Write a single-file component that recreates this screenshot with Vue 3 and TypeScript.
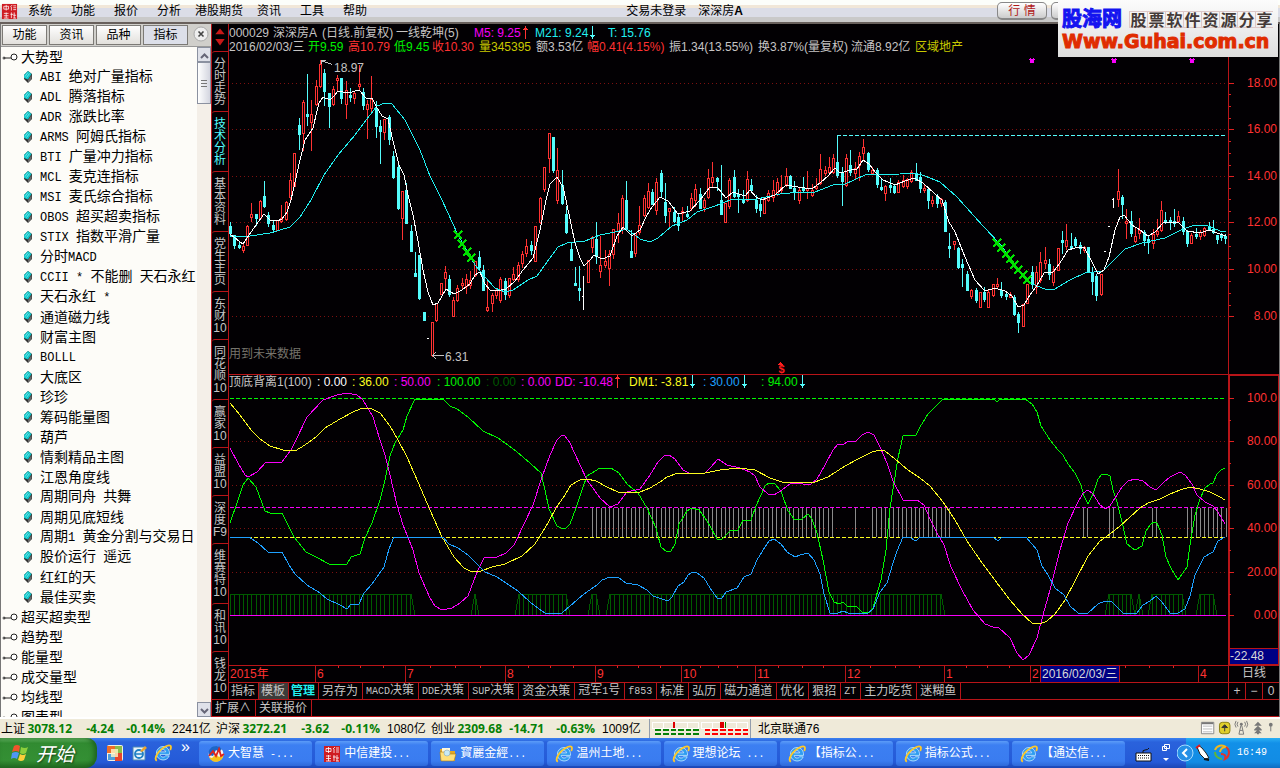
<script setup lang="ts">
import { ref } from 'vue'

interface Run { text: string; latin: boolean }
interface Readout { text: string; tone: string; width: number; arrow?: 'up' | 'down' }

/* Latin characters are set in a half-width face next to full-width ideographs. */
function runs(source: string): Run[] {
  return (source.match(/[\x20-\x7e]+|[^\x20-\x7e]+/g) ?? []).map((text) => ({
    text,
    latin: /^[\x20-\x7e]/.test(text),
  }))
}

const menus = ['系统', '功能', '报价', '分析', '港股期货', '资讯', '工具', '帮助']
const panels = ['功能', '资讯', '品种', '指标']
const activePanel = ref('指标')

const indicators = [
  'ABI 绝对广量指标', 'ADL 腾落指标', 'ADR 涨跌比率', 'ARMS 阿姆氏指标', 'BTI 广量冲力指标',
  'MCL 麦克连指标', 'MSI 麦氏综合指标', 'OBOS 超买超卖指标', 'STIX 指数平滑广量', '分时MACD',
  'CCII * 不能删 天石永红', '天石永红 *', '通道磁力线', '财富主图', 'BOLLL', '大底区', '珍珍',
  '筹码能量图', '葫芦', '情剩精品主图', '江恩角度线', '周期同舟 共舞', '周期见底短线',
  '周期1 黄金分割与交易日', '股价运行 遥远', '红红的天', '最佳买卖',
]
const groups = ['超买超卖型', '趋势型', '能量型', '成交量型', '均线型', '图表型']

const views: string[][] = [
  ['分', '时', '走', '势'], ['技', '术', '分', '析'], ['基', '本', '资', '料'], ['党', '生', '主', '页'],
  ['东', '财', '10'], ['同', '花', '顺', '10'], ['赢', '家', '10'], ['益', '盟', '10'],
  ['深', '度', 'F9'], ['维', '赛', '特', '10'], ['和', '讯', '10'], ['钱', '龙', '10'],
]
const activeView = ref(1)

const titleLine: Readout[] = [
  { text: '000029', tone: 'plain', width: 44 },
  { text: '深深房A', tone: 'plain', width: 49 },
  { text: '(日线.前复权)', tone: 'plain', width: 74 },
  { text: '一线乾坤(5)', tone: 'plain', width: 78 },
  { text: 'M5: 9.25', tone: 'magenta', width: 61, arrow: 'up' },
  { text: 'M21: 9.24', tone: 'cyan', width: 73, arrow: 'down' },
  { text: 'T: 15.76', tone: 'cyan', width: 60 },
]
const quoteLine: Readout[] = [
  { text: '2016/02/03/三', tone: 'plain', width: 79 },
  { text: '开9.59', tone: 'green', width: 40 },
  { text: '高10.79', tone: 'red', width: 46 },
  { text: '低9.45', tone: 'green', width: 38 },
  { text: '收10.30', tone: 'red', width: 47 },
  { text: '量345395', tone: 'olive', width: 57 },
  { text: '额3.53亿', tone: 'plain', width: 51 },
  { text: '幅0.41(4.15%)', tone: 'red', width: 82 },
  { text: '振1.34(13.55%)', tone: 'plain', width: 89 },
  { text: '换3.87%(量复权)', tone: 'plain', width: 93 },
  { text: '流通8.92亿', tone: 'plain', width: 64 },
  { text: '区域地产', tone: 'olive', width: 50 },
]
const studyLine: Readout[] = [
  { text: '顶底背离1(100)', tone: 'plain', width: 88 },
  { text: ': 0.00', tone: 'white', width: 35 },
  { text: ': 36.00', tone: 'yellow', width: 42 },
  { text: ': 50.00', tone: 'magenta', width: 43 },
  { text: ': 100.00', tone: 'green', width: 49 },
  { text: ': 0.00', tone: 'forest', width: 35 },
  { text: ': 0.00', tone: 'magenta', width: 34 },
  { text: 'DD: -10.48', tone: 'magenta', width: 74, arrow: 'up' },
  { text: 'DM1: -3.81', tone: 'yellow', width: 74, arrow: 'down' },
  { text: ': 30.00', tone: 'blue', width: 58, arrow: 'down' },
  { text: ': 94.00', tone: 'green', width: 50, arrow: 'down' },
]

/* x, rising(1)/falling(0)/flat(2), high, body top, body bottom, low */
const candles: number[][] = [
  [230,0,222,226,233,235],[234,0,235,235,245,248],[239,0,241,245,247,248],[243,1,244,246,250,252],[247,1,225,226,245,245],[251,1,203,214,217,221],[256,0,214,214,218,225],[260,1,200,201,218,218],[264,0,181,196,206,207],[268,0,212,215,223,226],[273,0,220,225,229,232],[277,1,220,220,230,230],[281,1,205,218,221,222],[286,1,201,202,219,220],[290,1,173,180,197,199],[294,1,153,153,186,186],[299,0,118,125,134,149],[303,1,100,102,133,150],[307,0,74,114,116,125],[311,1,100,114,122,150],[316,1,80,86,104,105],[320,1,60,64,86,87],[324,0,69,73,91,105],[329,0,93,93,106,127],[333,1,86,89,104,105],[337,1,75,78,80,90],[341,0,78,78,98,103],[346,1,81,90,104,118],[350,0,88,95,97,101],[354,1,91,93,98,103],[359,1,65,84,86,90],[363,0,88,92,105,109],[367,1,100,104,109,138],[371,1,76,99,108,111],[376,0,101,108,126,137],[380,0,120,126,131,163],[384,1,119,119,132,139],[389,0,115,117,139,144],
  [393,0,151,156,177,178],[398,0,162,167,208,209],[402,1,191,191,218,239],[406,0,183,190,223,223],[411,0,225,231,251,251],[415,0,252,273,276,276],[419,0,255,255,298,299],[424,0,312,312,320,320],[428,2,338,338,338,338],[432,1,322,322,355,356],[436,1,303,303,320,321],[441,1,283,283,294,294],[445,1,266,272,278,288],[449,0,275,279,294,296],[453,1,297,300,316,316],[457,1,285,288,300,301],[462,1,278,283,285,288],[466,1,274,279,286,293],[470,1,271,280,285,288],[475,1,261,261,275,276],[479,0,251,257,267,270],[483,0,265,270,290,290],[487,1,279,307,310,311],[492,1,293,295,303,311],[496,1,289,290,295,298],[500,1,277,279,300,302],[505,0,278,281,294,299],[509,1,278,278,295,297],[513,1,267,274,279,280],[518,1,262,265,279,281],[522,1,251,254,263,267],[526,1,239,246,253,256],[531,0,241,245,250,254],[535,1,226,226,261,261],
  [540,1,197,198,222,223],[544,1,167,167,189,191],[549,1,133,133,158,172],[553,0,137,137,170,172],[557,1,148,170,200,203],[562,0,170,185,203,204],[566,0,206,214,232,233],[571,0,242,249,260,260],[575,0,267,283,285,285],[579,0,266,288,290,300],[583,2,276,296,296,309],[588,1,260,260,282,282],[592,1,236,237,247,252],[596,0,222,239,256,263],[600,1,236,265,271,277],[605,1,250,261,265,267],[609,1,250,254,268,285],[613,1,229,229,254,258],[618,1,213,223,231,242],[622,1,195,198,228,233],[626,0,181,200,229,230],[631,0,230,251,257,257],[635,1,233,233,253,256],[639,1,206,225,232,234],[644,1,195,198,215,216],[648,1,183,191,207,208],[652,0,189,192,204,204],[656,1,178,182,210,214],[661,0,170,173,191,196],[665,0,183,202,215,222],[669,1,208,208,211,226],[674,0,207,212,221,222],[678,0,214,217,225,230],[682,1,207,211,213,220],[687,0,206,214,216,217],[691,1,193,198,208,210],[695,1,184,189,200,206],[700,0,188,194,208,208],[704,1,198,200,207,211],[708,1,169,178,197,198],[712,1,162,177,182,186],[717,0,177,178,181,190],[721,0,165,200,214,214],[725,1,203,203,222,222],[729,1,178,180,206,208],[734,0,170,177,196,197],[738,0,189,194,196,212],[743,0,190,200,202,203],[747,1,171,179,200,201],[751,0,179,185,190,191],[756,0,195,200,208,212],[760,0,200,204,210,216],[764,1,198,198,213,213],[768,1,190,193,200,201],[773,1,180,190,197,201],
  [777,1,178,182,194,195],[781,1,175,187,190,193],[786,1,168,176,184,186],[790,0,175,176,188,188],[794,0,181,188,191,199],[799,1,188,190,200,203],[803,0,177,188,190,191],[807,1,171,188,190,198],[812,1,184,190,195,196],[816,1,178,186,188,189],[820,1,154,169,183,184],[825,1,166,170,173,175],[829,1,157,167,172,173],[833,1,154,158,172,173],[837,0,136,162,175,177],[842,0,167,172,181,205],[846,1,154,158,185,186],[850,0,150,165,172,175],[855,1,162,168,173,178],[859,1,152,156,165,180],[863,1,139,147,153,160],[868,0,152,153,169,171],[872,1,167,170,173,174],[877,0,168,170,184,187],[881,0,179,187,189,190],[885,1,185,186,193,200],[890,0,178,185,187,192],[894,0,184,186,192,193],[898,1,180,182,192,192],[903,1,175,180,186,187],[907,1,178,179,186,188],[911,1,170,172,181,182],[916,0,163,173,180,180],[920,0,172,177,188,192],[924,1,185,188,190,192],[928,0,187,189,200,208],[932,1,196,200,203,206],[937,0,194,196,203,207],[941,1,198,199,203,206],[945,0,200,202,231,231],[949,0,233,246,248,257],[954,1,241,241,244,249],[958,0,247,248,267,268],[962,0,259,264,267,286],[967,0,271,274,290,290],[971,1,289,290,296,298],[976,0,288,290,300,302],[980,1,292,292,307,307],[984,0,287,292,299,301],[988,1,290,292,307,307],[993,1,284,284,295,296],[997,1,278,284,286,288],[1001,0,282,290,295,297],[1006,0,291,294,296,299],[1010,1,292,294,297,297],
  [1014,0,295,297,314,315],[1018,0,312,314,322,332],[1023,1,304,304,326,326],[1027,1,284,284,303,303],[1032,0,266,272,284,288],[1036,1,266,272,287,293],[1040,1,252,262,280,282],[1045,1,247,260,263,268],[1049,0,259,264,274,279],[1053,1,266,271,282,285],[1058,1,248,248,270,270],[1062,0,231,240,242,253],[1066,1,224,240,246,249],[1071,0,233,246,248,248],[1075,0,237,239,245,247],[1080,0,242,245,248,253],[1084,1,246,247,250,252],[1088,0,247,247,271,271],[1092,0,267,272,281,294],[1096,0,274,276,295,300],[1101,1,274,274,294,295],[1105,2,251,251,251,251],[1109,2,226,226,226,226],[1113,2,198,199,199,207],[1118,1,169,191,199,206],[1122,0,195,197,204,218],[1126,1,209,221,223,238],[1131,0,211,221,233,236],[1135,1,227,236,241,242],[1139,1,218,230,233,238],[1144,0,230,232,240,245],[1148,0,236,239,242,253],[1153,1,229,234,243,248],[1157,1,219,231,234,236],[1161,1,201,210,230,231],[1165,0,212,220,222,223],[1170,0,217,220,222,229],[1174,0,209,221,223,226],[1178,1,211,216,221,222],[1183,0,217,221,231,234],[1187,0,230,231,243,246],[1191,1,233,235,243,243],[1196,0,228,234,236,238],[1200,1,230,232,236,239],[1204,1,227,228,235,236],[1209,0,222,227,229,230],[1213,0,220,229,232,233],[1217,0,235,235,239,243],[1221,0,233,235,237,240],[1225,0,234,236,238,243],
]

const fastAverage = '230,234 235,238 243,244 247,238 256,225 264,214 270,220 277,221 282,219 287,212 291,200 300,160 305,140 313,128 319,103 323,97 330,100 334,96 338,91 348,93 359,90 366,98 372,98 376,106 382,116 388,119 393,141 399,165 404,175 408,195 413,215 418,241 423,270 428,292 433,305 438,303 446,289 454,294 462,290 470,284 475,275 480,272 485,284 490,290 496,291 506,289 515,281 523,270 533,258 540,230 546,200 550,184 557,177 563,187 566,200 575,243 580,258 584,266 590,260 594,255 602,259 610,256 617,236 623,227 632,236 640,230 646,217 652,207 660,197 668,201 678,214 690,211 700,200 710,187 717,187 726,198 733,192 745,196 750,190 756,197 762,200 775,195 786,185 798,187 812,189 820,183 828,176 835,168 840,173 851,170 857,169 863,160 869,164 876,173 883,180 895,185 905,181 914,178 923,183 935,194 942,200 949,222 955,232 965,257 975,280 985,291 995,288 1005,291 1012,296 1018,307 1024,305 1030,295 1036,287 1044,273 1053,272 1060,263 1068,250 1075,248 1084,247 1092,262 1098,274 1104,270 1109,257 1115,230 1120,217 1124,215 1132,225 1140,230 1148,236 1155,232 1163,223 1178,222 1187,231 1200,233 1209,230 1217,233 1226,236'
const slowAverage = '230,236 250,236 270,233 290,227 300,217 311,200 324,175 338,155 355,135 370,115 377,106 385,103 392,104 405,120 420,150 430,176 442,200 458,235 475,265 485,277 495,288 505,292 513,290 528,280 537,276 547,262 558,247 567,243 585,241 600,235 615,232 627,229 640,239 650,242 658,238 672,226 687,220 697,212 715,206 730,200 757,199 780,194 800,192 815,192 833,185 845,184 865,175 900,174 915,173 925,176 940,182 957,197 983,226 1000,244 1020,272 1032,284 1045,289 1055,289 1070,280 1085,273 1103,271 1125,249 1142,243 1165,238 1183,229 1195,225 1208,226 1220,231 1226,232'
const crosses: number[][] = [
  [458,235],[462,244],[467,252],[471,258],[997,243],[1001,248],[1006,254],[1010,259],[1014,265],[1018,270],[1023,275],[1027,280],
]
const flags: number[][] = [[1032, 61], [1114, 61], [1192, 61]]

const curves = [
  { tone: 'stroke-green', points: '230,523 237,503 243,485 248,478 256,487 265,511 270,513 282,513 294,537 306,552 316,557 329,564 347,564 351,557 360,554 365,538 372,523 380,500 385,480 390,456 395,443 403,430 407,416 415,399 443,399 450,406 457,409 468,417 483,431 498,438 512,448 517,452 530,463 541,473 545,490 549,509 557,526 561,528 566,528 570,524 576,508 582,490 587,476 600,468 611,468 619,473 627,484 638,493 647,508 656,528 661,547 667,552 671,551 675,544 679,524 687,511 692,508 699,510 705,518 710,526 717,539 722,539 730,531 738,530 743,520 751,520 756,506 765,486 769,483 774,483 781,491 788,511 795,520 802,519 808,514 812,519 817,533 823,560 829,592 834,602 839,604 843,602 847,606 856,606 862,612 869,613 873,608 876,597 881,580 886,550 890,508 894,483 898,458 903,436 916,435 920,427 928,414 937,405 943,399 994,399 997,402 1000,399 1025,399 1032,404 1037,412 1041,426 1050,440 1058,450 1063,455 1068,464 1075,473 1081,485 1084,496 1088,504 1093,494 1098,479 1102,474 1106,474 1110,476 1113,490 1117,502 1123,526 1127,544 1135,550 1142,546 1146,531 1150,525 1154,522 1157,523 1162,535 1166,557 1171,568 1178,580 1187,567 1190,545 1195,515 1200,499 1205,488 1210,484 1213,483 1217,474 1221,470 1225,468' },
  { tone: 'stroke-magenta', points: '230,448 238,463 245,475 248,477 257,472 266,462 282,462 291,450 296,440 307,417 323,400 337,395 347,393 357,395 363,400 373,417 380,440 385,455 390,475 397,505 403,525 413,550 419,573 430,598 435,606 442,610 452,608 460,603 468,596 474,580 478,570 484,558 497,557 506,553 514,545 525,522 533,505 542,477 550,455 557,440 562,435 565,436 570,443 580,465 587,480 595,491 600,498 610,507 618,504 627,492 640,489 650,475 658,462 664,456 669,455 675,459 683,470 691,474 697,473 705,473 711,467 718,459 727,465 740,468 750,472 755,476 760,487 768,494 774,495 782,490 791,483 803,484 811,484 817,479 825,465 833,450 838,444 843,445 848,441 856,441 862,435 868,432 874,435 880,447 887,463 893,481 903,500 911,501 917,500 924,505 930,519 937,533 944,545 951,567 962,590 973,610 985,624 993,627 998,627 1010,638 1017,653 1023,660 1029,655 1037,638 1043,615 1050,590 1060,550 1068,523 1077,504 1083,493 1088,490 1093,494 1100,505 1106,509 1110,506 1115,498 1122,487 1128,481 1135,479 1143,481 1150,487 1156,490 1163,483 1170,477 1176,474 1180,472 1185,475 1192,484 1197,495 1205,502 1213,506 1218,512 1225,524' },
  { tone: 'stroke-yellow', points: '230,403 240,415 251,430 260,439 270,446 283,450 295,451 305,445 316,437 325,428 340,419 355,411 363,408 370,408 380,413 390,426 398,440 407,457 418,482 430,510 442,537 454,557 464,568 472,572 481,571 492,567 505,564 522,556 535,544 548,523 556,508 565,495 571,485 580,480 587,479 596,481 607,487 618,492 640,492 650,488 660,482 667,477 678,473 705,473 720,470 738,468 755,470 770,478 782,482 800,483 815,482 828,477 845,466 860,458 872,452 880,450 885,451 895,459 908,470 920,478 930,486 943,502 955,520 967,541 980,560 997,583 1010,600 1022,614 1032,623 1040,624 1047,621 1055,614 1065,600 1075,581 1088,556 1100,541 1110,534 1120,526 1140,508 1148,503 1160,499 1170,494 1180,490 1190,487 1200,489 1210,492 1220,497 1225,500' },
  { tone: 'stroke-blue', points: '230,537 249,537 258,543 268,552 282,552 289,565 295,574 307,585 320,593 327,599 340,605 347,609 351,604 359,604 364,593 372,584 384,567 389,549 394,537 443,537 449,544 458,548 468,555 480,567 485,572 497,577 518,591 530,602 539,609 545,613 562,613 570,606 584,594 597,585 602,580 610,577 618,577 626,583 638,585 647,590 653,596 662,599 668,601 672,597 678,586 684,582 688,575 693,572 697,573 704,578 710,588 717,598 722,598 726,592 737,588 744,577 751,574 757,560 765,547 769,541 774,539 781,544 787,552 795,557 800,555 808,553 814,560 820,574 824,594 830,613 838,613 843,611 848,613 868,613 873,609 880,592 887,583 893,563 897,551 903,537 909,537 916,541 920,537 993,537 998,541 1002,537 1026,537 1037,550 1042,566 1048,575 1055,588 1064,595 1070,606 1078,613 1088,613 1098,604 1105,601 1111,601 1117,607 1123,613 1137,613 1143,605 1150,601 1156,596 1162,602 1170,613 1178,613 1185,609 1190,596 1195,575 1204,557 1213,552 1218,541 1225,537' },
]

const STEP = 30 / 7
function barsBetween(from: number, to: number): number[] {
  const out: number[] = []
  for (let x = from; x <= to + 1; x += STEP) out.push(Math.round(x))
  return out
}
const plateaus: number[][] = [
  [230, 411], [475, 475], [519, 566], [592, 596], [610, 941], [1109, 1131], [1139, 1139], [1152, 1182], [1200, 1213],
]
const forestBars = plateaus.flatMap(([a, b]) => barsBetween(a, b))
const forestTops = plateaus.map(([a, b]) => `${a === 230 ? 230 : a - 4},615 ${a},594 ${b},594 ${b + 4},615`)
const greyBars = [
  ...barsBetween(592, 833), 855, ...barsBetween(872, 949), 1083, 1087, 1109, 1113, 1152, 1156, ...barsBetween(1187, 1225),
]

const priceTicks = [18, 16, 14, 12, 10, 8].map((v, i) => ({ label: `${v}.00`, y: [83, 129, 176, 222, 269, 316][i] }))
const studyTicks = [100, 80, 60, 40, 20, 0].map((v, i) => ({
  label: v === 100 ? '100.0' : `${v}.00`,
  y: [398, 441, 485, 528, 572, 615][i],
}))
const priceMinor = [94, 106, 118, 141, 153, 165, 188, 199, 211, 234, 246, 258, 281, 293, 305]
const studyMinor = [420, 463, 507, 550, 594]

const months = [
  { label: '2015年', x: 229, first: true }, { label: '6', x: 315 }, { label: '7', x: 405 }, { label: '8', x: 505 },
  { label: '9', x: 595 }, { label: '10', x: 681 }, { label: '11', x: 755 }, { label: '12', x: 845 },
  { label: '1', x: 944 }, { label: '2', x: 1030 }, { label: '4', x: 1198 },
]
const axisTicks = [338, 360, 383, 430, 455, 480, 528, 550, 573, 617, 638, 660, 700, 718, 737, 778, 802, 823, 870, 895, 919, 966, 987, 1009, 1125, 1149, 1173]
const leftOf = (x: number) => ({ left: `${((x - 229) / 999) * 100}%` })
const priceTop = (y: number) => ({ top: `${((y - 24) / 350) * 100}%` })
const studyTop = (y: number) => ({ top: `${((y - 374) / 291) * 100}%` })

const templates = [
  '指标', '模板', '管理', '另存为', 'MACD决策', 'DDE决策', 'SUP决策', '资金决策', '冠军1号', 'f853', '标准',
  '弘历', '磁力通道', '优化', '狠招', 'ZT', '主力吃货', '迷糊鱼',
]
const indices = [
  { name: '上证', value: '3078.12', change: '-4.24', rate: '-0.14%', amount: '2241亿' },
  { name: '沪深', value: '3272.21', change: '-3.62', rate: '-0.11%', amount: '1080亿' },
  { name: '创业', value: '2309.68', change: '-14.71', rate: '-0.63%', amount: '1009亿' },
]
const tasks = [
  { label: '大智慧 -...', icon: 'wisdom' }, { label: '中信建投...', icon: 'seal' }, { label: '寳麗金經...', icon: 'folder' },
  { label: '温州土地...', icon: 'ie' }, { label: '理想论坛 ...', icon: 'ie' }, { label: '【指标公...', icon: 'ie' },
  { label: '指标公式...', icon: 'ie' }, { label: '【通达信...', icon: 'ie' },
]
</script>

<template>
  <div class="desktop">
    <svg class="defs" aria-hidden="true">
      <symbol id="ie" viewBox="0 0 18 18">
        <path d="M9 2.500a6.700 6.700 0 0 0-6.600 6.800A6.600 6.600 0 0 0 9 16c3 0 5.200-1.500 6.200-4.200h-3.600c-.6.9-1.400 1.300-2.500 1.300-1.700 0-2.800-1-2.900-2.700h9.300C15.900 5.800 13.100 2.500 9 2.500zm-2.800 5.400C6.500 6.500 7.600 5.600 9 5.600s2.500.9 2.700 2.300z" fill="#2f9cf0" stroke="#c4ecff" stroke-width=".8" />
        <path d="M2.800 16.800C-1 14 5.500 5 12.500 2 16.500.4 18 2.200 16.200 6" fill="none" stroke="#ffc928" stroke-width="1.800" />
      </symbol>
      <symbol id="wisdom" viewBox="0 0 18 18">
        <circle cx="9" cy="9" r="7.500" fill="#f4f4f4" />
        <path d="M1.500 8A7.500 7.500 0 0 1 15 4l-3 3-3-2-3 6-4-1z" fill="#1b66c9" />
        <path d="M16.500 9A7.500 7.500 0 0 1 2 12l3 1 4-4 3 3z" fill="#f6c21c" />
        <path d="M2 11l4-5 3 5 3-7 2 7 3-2" fill="none" stroke="#e0241b" stroke-width="1.800" />
      </symbol>
      <symbol id="seal" viewBox="0 0 18 18">
        <path d="M1 1h16v16H1z" fill="#cf1c22" />
        <path d="M3 3.500h5v3H3zM5.500 2v6M10 4l2-2M11 4v4M13 3h3M13 5h3M13 7h3M3 11h5M3 13.500h5M5.500 10v6M3 16h5M11 10v6M10 12h3M14 10v6M13 13h3M13 16h3" fill="none" stroke="#fff" stroke-width=".8" />
      </symbol>
      <symbol id="folder" viewBox="0 0 18 18">
        <path d="M1 4h6l2 2h7v10H2z" fill="#e5a823" />
        <path d="M3 3h8v9H3z" fill="#fff8dc" />
        <path d="M1 7h5l2 2h9l-2 7H2z" fill="#ffe07a" stroke="#a97710" stroke-width=".6" />
        <circle cx="8" cy="8" r="3" fill="#c8eaf6" stroke="#8ab" stroke-width=".6" />
      </symbol>
      <symbol id="arrow-up" viewBox="0 0 5 13">
        <path d="M2 0h1v13H2zM1 2h3v1H1zM0 3h5v1H0z" fill="#ff3232" />
      </symbol>
      <symbol id="arrow-down" viewBox="0 0 5 13">
        <path d="M2 0h1v13H2zM1 10h3v1H1zM0 9h5v1H0z" fill="#54fcfc" />
      </symbol>
    </svg>

    <header class="menubar">
      <svg class="logo" viewBox="0 0 17 17" aria-hidden="true"><use href="#seal" /></svg>
      <nav class="menus">
        <button v-for="m in menus" :key="m" type="button" :class="{ tight: m.length > 2 }">{{ m }}</button>
      </nav>
      <p class="caption"><span>交易未登录</span><span>深深房<b>A</b></span></p>
      <div class="modes">
        <button type="button">行 情</button>
        <button type="button" aria-label="资讯"></button>
      </div>
    </header>

    <div class="watermark">
      <div class="mark-top">
        <strong>股海网</strong>
        <span class="slogan"><i v-for="ch in '股票软件资源分享'" :key="ch">{{ ch }}</i></span>
      </div>
      <div class="mark-url">Www.Guhai.com.cn</div>
    </div>

    <main class="body">
      <aside class="sidebar">
        <div class="panel-tabs">
          <button v-for="p in panels" :key="p" type="button" :class="{ active: p === activePanel }" @click="activePanel = p">{{ p }}</button>
          <button type="button" class="close" aria-label="关闭">
            <svg viewBox="0 0 16 16"><circle cx="8" cy="8" r="7" fill="#eee" stroke="#aaa" /><path d="M5.500 5.500l5 5M10.500 5.500l-5 5" stroke="#444" stroke-width="1.600" /></svg>
          </button>
        </div>
        <div class="tree-wrap">
          <ul class="tree">
            <li class="group">
              <svg class="key" viewBox="0 0 16 8"><circle cx="2" cy="5" r="1.500" fill="#666" /><path d="M2 5h7" stroke="#222" /><circle cx="12" cy="4" r="3" fill="#fff" stroke="#222" /></svg>
              <span>大势型</span>
            </li>
            <li v-for="name in indicators" :key="name" class="leaf">
              <svg class="gem" viewBox="0 0 10 12"><path d="M5 0l4 3v5l-4 4-4-4V4z" fill="#333" /><path d="M5 0l3.500 3L5 8.500 1 7V4z" fill="#12c4c8" /><path d="M5 9l3.500-5v4L5 11.500z" fill="#6a6a6a" /><path d="M2 5.500l3-4M3.500 6.500l3-4" stroke="#9ff" stroke-width=".6" /></svg>
              <span><span v-for="(r, i) in runs(name)" :key="i" :class="{ latin: r.latin }">{{ r.text }}</span></span>
            </li>
            <li v-for="name in groups" :key="name" class="group">
              <svg class="key" viewBox="0 0 16 8"><circle cx="2" cy="5" r="1.500" fill="#666" /><path d="M2 5h7" stroke="#222" /><circle cx="12" cy="4" r="3" fill="#fff" stroke="#222" /></svg>
              <span>{{ name }}</span>
            </li>
          </ul>
          <div class="scroller">
            <button type="button" aria-label="向上"><svg viewBox="0 0 9 6"><path d="M1 5l3.500-3.500L8 5" fill="none" stroke="#667" stroke-width="2" /></svg></button>
            <div class="thumb"><i></i><i></i><i></i></div>
            <div class="track"></div>
            <button type="button" aria-label="向下"><svg viewBox="0 0 9 6"><path d="M1 1l3.500 3.500L8 1" fill="none" stroke="#667" stroke-width="2" /></svg></button>
          </div>
        </div>
      </aside>

      <section class="terminal">
        <div class="upper">
          <nav class="views">
            <div class="pager">
              <svg viewBox="0 0 17 26"><path d="M8.500 4l5 6h-10zM3.500 15h10l-5 7z" fill="#c81818" /></svg>
            </div>
            <button v-for="(v, i) in views" :key="i" type="button" :class="{ active: i === activeView, long: v.length === 4 }" @click="activeView = i">
              <span v-for="(c, k) in v" :key="k">{{ c }}</span>
            </button>
          </nav>

          <div class="work">
            <div class="pane">
              <div class="readouts first">
                <span v-for="(r, i) in titleLine" :key="i" :class="['readout', r.tone]" :style="{ width: r.width + 'px' }">{{ r.text }}<svg v-if="r.arrow" class="arrow"><use :href="'#arrow-' + r.arrow" /></svg></span>
              </div>
              <div class="readouts">
                <span v-for="(r, i) in quoteLine" :key="i" :class="['readout', r.tone]" :style="{ width: r.width + 'px' }">{{ r.text }}</span>
              </div>
              <svg class="plot" viewBox="229 54 999 320" preserveAspectRatio="none" shape-rendering="crispEdges">
                <line v-for="t in priceTicks" :key="t.y" class="grid" x1="232" x2="1226" :y1="t.y + .5" :y2="t.y + .5" />
                <g v-for="c in candles" :key="c[0]" :class="['candle', ['down', 'up', 'flat'][c[1]]]">
                  <rect class="wick" :x="c[0]" :y="c[2]" width="1" :height="c[5] - c[2] + 1" />
                  <rect v-if="c[1] === 0" class="solid" :x="c[0] - 1" :y="c[3]" width="3" :height="c[4] - c[3] + 1" />
                  <rect v-else-if="c[1] === 1" class="hollow" :x="c[0] - .5" :y="c[3] + .5" width="2" :height="c[4] - c[3]" />
                  <rect v-else class="wick" :x="c[0] - 1" :y="c[3]" width="2" height="1" />
                </g>
                <line class="ceiling" x1="837" x2="1225" y1="135.500" y2="135.500" />
                <polyline class="stroke-cyan" :points="slowAverage" />
                <polyline class="stroke-white" :points="fastAverage" />
                <path v-for="k in crosses" :key="k[0]" class="cross" :d="`M${k[0] - 4} ${k[1] - 4}l8 8M${k[0] + 4} ${k[1] - 4}l-8 8`" />
                <path v-for="k in flags" :key="k[0]" class="flag" :d="`M${k[0] - 2} ${k[1] - 2}l4 4M${k[0] + 2} ${k[1] - 2}l-4 4`" />
                <path class="pointer" d="M332 64.500l-11-4M321 60v4M321 60.500h5M433 355.500h11M436 352l-3 3.500 3 3.500" />
                <path class="pip" d="M777 365l3-3 3 3z" />
              </svg>
              <span class="note high">18.97</span>
              <span class="note low">6.31</span>
              <span class="note hint">用到未来数据</span>
              <span class="note coin">$</span>
            </div>
            <div class="scale">
              <i v-for="y in priceMinor" :key="y" class="tick" :style="priceTop(y)"></i>
              <span v-for="t in priceTicks" :key="t.y" class="mark" :style="priceTop(t.y)">{{ t.label }}</span>
            </div>

            <div class="pane study">
              <div class="readouts">
                <span v-for="(r, i) in studyLine" :key="i" :class="['readout', r.tone]" :style="{ width: r.width + 'px' }">{{ r.text }}<svg v-if="r.arrow" class="arrow"><use :href="'#arrow-' + r.arrow" /></svg></span>
              </div>
              <svg class="plot" viewBox="229 389 999 276" preserveAspectRatio="none" shape-rendering="crispEdges">
                <line v-for="t in studyTicks.slice(1, 5)" :key="t.y" class="grid" x1="232" x2="1226" :y1="t.y + .5" :y2="t.y + .5" />
                <rect v-for="x in forestBars" :key="'f' + x" class="forest-bar" :x="x" y="594" width="1" height="21" />
                <polyline v-for="p in forestTops" :key="p" class="stroke-forest" :points="p" />
                <rect v-for="x in greyBars" :key="'g' + x" class="grey-bar" :x="x" y="508" width="1" height="29" />
                <line class="dash-green" x1="230" x2="1225" y1="398.500" y2="398.500" />
                <line class="dash-magenta" x1="230" x2="1225" y1="507.500" y2="507.500" />
                <line class="dash-yellow" x1="230" x2="1225" y1="537.500" y2="537.500" />
                <line class="stroke-magenta" x1="230" x2="1226" y1="615.500" y2="615.500" />
                <polyline v-for="c in curves" :key="c.tone" :class="c.tone" :points="c.points" />
              </svg>
            </div>
            <div class="scale study-scale">
              <i v-for="y in studyMinor" :key="y" class="tick" :style="studyTop(y)"></i>
              <span v-for="t in studyTicks" :key="t.y" class="mark" :style="studyTop(t.y)">{{ t.label }}</span>
              <span class="floor">-22.48</span>
            </div>

            <div class="axis">
              <i v-for="x in axisTicks" :key="x" class="axis-tick" :style="leftOf(x)"></i>
              <span v-for="m in months" :key="m.label" :class="['month', { first: m.first }]" :style="leftOf(m.x)">{{ m.label }}</span>
              <span class="month cursor" :style="leftOf(1040)">2016/02/03/三</span>
            </div>
            <div class="period">日线</div>

            <nav class="templates">
              <button v-for="(t, i) in templates" :key="t" type="button" :class="{ slim: i < 3, pressed: i === 1, lit: i === 2 }"><span v-for="(r, k) in runs(t)" :key="k" :class="{ latin: r.latin }">{{ r.text }}</span></button>
            </nav>
            <div class="zoomers">
              <button type="button">+</button><button type="button">−</button><button type="button">0</button>
            </div>
          </div>
        </div>
        <nav class="extras">
          <button type="button">扩展∧</button>
          <button type="button">关联报价</button>
        </nav>
      </section>
    </main>

    <footer class="status">
      <div v-for="x in indices" :key="x.name" class="index">
        <span class="name">{{ x.name }}</span><b class="value">{{ x.value }}</b><b class="change">{{ x.change }}</b><b class="rate">{{ x.rate }}</b><span class="amount">{{ x.amount }}</span>
      </div>
      <svg class="meter" viewBox="0 0 108 20" shape-rendering="crispEdges">
        <path d="M.5 0v20M107.500 0v20" stroke="#8c99aa" />
        <path d="M3.500 3.500h49v6h-49zM55.500 3.500h49v6h-49zM15.500 3v6M40.500 3v6M67.500 3v6M92.500 3v6" fill="none" stroke="#fff" />
        <path d="M26 3h2v6h-2zM75 3h4v6h-4z" fill="#d00" />
        <path d="M80 3h1v6h-1z" fill="#080" />
        <path d="M7 12h46M7 16h46" stroke="#068006" stroke-width="2" stroke-dasharray="6 2" />
        <path d="M59 12h46M59 16h46" stroke="#f00" stroke-width="2" stroke-dasharray="6 2" />
      </svg>
      <span class="server">北京联通76</span>
      <div class="status-icons">
        <svg viewBox="0 0 84 20">
          <path d="M3.500 3.500h13v12h-13z" fill="#fff" stroke="#888" /><path d="M4 4.500h12" stroke="#777" stroke-width="2" /><path d="M5 7.500h10M5 10.500h10M5 13.500h10" stroke="#bbb" />
          <rect x="22.500" y="3.500" width="11" height="12" rx="3" fill="#e0cf2b" stroke="#887d10" /><path d="M28 13V9h-3l3-3 3 3h-3" fill="#333" stroke="#333" />
          <path d="M45 7l-2 9h5l-2-9zM42 3a4 4 0 0 0 0 5M49 3a4 4 0 0 1 0 5M40 2a6 6 0 0 0 0 7M51 2a6 6 0 0 1 0 7M44 12h3" fill="none" stroke="#777" /><circle cx="45.500" cy="5.500" r="1.500" fill="#777" />
          <path d="M63 3l4 4h-8zM63 7l4 4h-8zM59 11h8v1h-8zM63 11l4 4h-8zM62 14h2v2h-2z" fill="#777" />
          <circle cx="76.500" cy="6" r="2" fill="#777" /><path d="M76.500 7v6" stroke="#777" />
        </svg>
      </div>
    </footer>

    <footer class="taskbar">
      <button type="button" class="start">
        <svg viewBox="0 0 20 18" aria-hidden="true">
          <path d="M3 2q3-2 6 0L8 8q-3-2-7 0z" fill="#f0542c" /><path d="M10 3q4 2 7 0l-2 6q-3 2-6 0z" fill="#8ccf3c" />
          <path d="M1 9q4-2 7 0l-2 6q-3-2-6 0z" fill="#4f97f5" /><path d="M9 10q3 2 6 0l-2 6q-3 2-6 0z" fill="#fbcf3a" />
        </svg>
        <span>开始</span>
      </button>
      <div class="quick">
        <svg viewBox="0 0 18 18"><rect x="1" y="1" width="16" height="16" rx="2" fill="#f5f2df" /><path d="M1 2h8v7H1z" fill="#ef6d28" /><path d="M9 2h7v7H9z" fill="#8bbd49" /><path d="M2 10h7v6H2z" fill="#4f9edb" /><path d="M9 9h7v8H9z" fill="#e8452c" /><path d="M5 5h7v8H5z" fill="#fff6c8" opacity=".8" /></svg>
        <svg viewBox="0 0 18 18"><path d="M3 3h12v13H3z" fill="#e9f4fb" stroke="#4c88b5" /><circle cx="9" cy="10" r="4" fill="none" stroke="#1d80c4" stroke-width="1.800" /><path d="M6 10h6" stroke="#1d80c4" stroke-width="1.500" /><path d="M10 7l5-5 2 2-5 4z" fill="#f0a52c" /></svg>
        <svg viewBox="0 0 18 18"><use href="#ie" /></svg>
        <span class="more">»</span>
      </div>
      <div class="tasks">
        <button v-for="(t, i) in tasks" :key="i" type="button">
          <svg class="task-icon"><use :href="'#' + t.icon" /></svg>
          <span><span v-for="(r, k) in runs(t.label)" :key="k" :class="{ latin: r.latin }">{{ r.text }}</span></span>
        </button>
      </div>
      <div class="language">
        <svg viewBox="0 0 44 24">
          <path d="M3 12h15v8H3z" fill="#fff" stroke="#111" /><path d="M5 14.500h11M5 17h11" stroke="#111" stroke-dasharray="1 1" /><path d="M10 12q-1-3 2-3t4-2" fill="none" stroke="#111" />
          <path d="M31.500 3.500h5v4h-5zM29.500 5.500h4v4h-4z" fill="#2858cc" stroke="#fff" /><path d="M30 17h6l-3 3z" fill="#fff" />
        </svg>
      </div>
      <div class="tray">
        <svg viewBox="0 0 58 24">
          <circle cx="8" cy="12" r="8" fill="#2590e6" stroke="#a6dcff" /><path d="M10 8l-4 4 4 4" fill="none" stroke="#fff" stroke-width="2" />
          <path d="M20 6q3-2 5 1l4 5 3 5-4 1-5-5z" fill="#fff" stroke="#222" /><path d="M19 7l4-3" stroke="#e01a1a" stroke-width="2" /><path d="M27 18l5 1" stroke="#111" stroke-width="2" />
          <path d="M38 9a7 7 0 0 1 11-3q-5 0-6 5" fill="none" stroke="#f0b81e" stroke-width="2" /><path d="M49 6a7 7 0 0 1-1 12q2-5-4-5" fill="none" stroke="#e53127" stroke-width="2" /><path d="M38 11q0 6 7 7" fill="none" stroke="#5fb53a" stroke-width="2" />
        </svg>
        <time>16:49</time>
      </div>
    </footer>
  </div>
</template>

<style>
body { margin: 0; overflow: hidden; background: #000; }
</style>

<style scoped>
.desktop {
  --red: #b81418;
  position: relative;
  display: flex;
  flex-direction: column;
  height: 100vh;
  min-width: 960px;
  font: 12px/14px "Liberation Sans", "Noto Sans CJK SC", sans-serif;
  color: #000;
  overflow: hidden;
}
button { margin: 0; padding: 0; border: 0; background: none; color: inherit; font: inherit; white-space: nowrap; }
p, ul { margin: 0; padding: 0; list-style: none; }
.defs { position: absolute; width: 0; height: 0; }
.latin { font-family: "Liberation Mono", monospace; font-size: 10px; white-space: pre; }

/* menu bar */
.menubar {
  flex: none; display: flex; align-items: center; height: 24px; box-sizing: border-box;
  border-bottom: 2px solid #68605c;
  background: linear-gradient(#fcfefa 0 5px, #f1e7d8 5px 8px, #dbdde7 8px 17px, #c9c9c9 17px);
}
.logo { width: 17px; height: 17px; margin: 0 1px; }
.menus { display: flex; gap: 1px; }
.menus button { padding: 0 9px; }
.menus .tight { padding: 0 4px; }
.caption { display: flex; gap: 12px; margin-left: auto; }
.modes { display: flex; gap: 4px; margin-left: 254px; padding-right: 179px; }
.modes button { width: 50px; height: 18px; box-sizing: border-box; border: 1px solid #888; border-bottom-width: 2px; border-radius: 5px; background: linear-gradient(#fff, #ccc); color: #b01818; }

.watermark { position: absolute; top: 0; right: 2px; width: 220px; height: 57px; background: linear-gradient(#fcfcfc, #dedede); overflow: hidden; z-index: 2; }
.mark-top { display: flex; align-items: center; gap: 7px; height: 20px; padding: 9px 0 0 4px; }
.mark-top strong { font-size: 20px; line-height: 20px; color: #1414f0; -webkit-text-stroke: 1px #1414f0; }
.slogan { display: flex; }
.slogan i { width: 18px; height: 17px; box-sizing: border-box; border: 1px solid #ddc8c8; border-right: 0; font: 700 16px/15px "Noto Sans CJK SC", sans-serif; text-align: center; color: #443a38; }
.mark-url { padding-left: 4px; font: 700 19px/24px "DejaVu Sans", sans-serif; color: #e02c00; -webkit-text-stroke: 1px #e02c00; }

/* side panel */
.body { flex: 1; display: flex; min-height: 0; }
.sidebar { flex: none; display: flex; flex-direction: column; width: 211px; box-sizing: border-box; border-left: 1px solid #777; background: #fdfcf8; }
.panel-tabs { flex: none; display: flex; gap: 2px; height: 23px; padding: 1px 0 0 1px; box-sizing: border-box; background: #d0cfcb; border-bottom: 1px solid #999; }
.panel-tabs button { width: 45px; height: 20px; box-sizing: border-box; border: 1px solid #7c7a76; background: linear-gradient(#fefefe, #e2e0dc); }
.panel-tabs .active { background: #dcdfe9; }
.panel-tabs .close { width: 16px; height: 18px; margin-left: auto; margin-right: 2px; border: 0; background: none; }
.close svg { display: block; width: 16px; height: 16px; }
.tree-wrap { flex: 1; display: flex; min-height: 0; }
.tree { flex: 1; min-width: 0; overflow: hidden; font-size: 14px; line-height: 20px; white-space: nowrap; }
.tree li { display: flex; align-items: center; height: 20px; }
.tree .latin { font-size: 12px; }
.key { width: 16px; height: 8px; margin: 0 3px 0 1px; flex: none; }
.gem { width: 10px; height: 12px; margin: 0 7px 0 22px; flex: none; }
.scroller { flex: none; display: flex; flex-direction: column; width: 14px; background: #f4efe8; }
.scroller button { height: 15px; border: 1px solid #8b91a0; background: #dfe1e9; line-height: 8px; }
.scroller svg { width: 9px; height: 6px; }
.thumb { display: flex; flex-direction: column; justify-content: center; align-items: center; gap: 2px; height: 42px; box-sizing: border-box; border: 1px solid #8b91a0; background: linear-gradient(90deg, #fff, #d3d5df); }
.thumb i { width: 6px; height: 1px; background: #777; }
.track { flex: 1; }

/* quote terminal */
.terminal { flex: 1; display: flex; flex-direction: column; min-width: 0; background: #020003; color: #c6c4c4; border-right: 1px solid #777; box-sizing: border-box; }
.upper { flex: 1; display: flex; min-height: 0; }
.views { flex: none; display: flex; flex-direction: column; width: 18px; box-sizing: border-box; border-left: 1px solid var(--red); border-right: 1px solid var(--red); overflow: hidden; }
.pager { flex: none; height: 27px; }
.pager svg { width: 16px; height: 26px; }
.views button { flex: none; display: flex; flex-direction: column; align-items: center; justify-content: center; height: 48px; box-sizing: border-box; border-top: 1px solid var(--red); border-radius: 3px 0 0; line-height: 12px; }
.views .long { height: 60px; }
.views .active { color: #54fcfc; }
.work { flex: 1; min-width: 0; display: grid; grid-template-columns: minmax(0, 1fr) 51px; grid-template-rows: 350fr 291fr 17px 17px; }
.pane { position: relative; display: flex; flex-direction: column; min-height: 0; min-width: 0; }
.study { border-top: 1px solid var(--red); }
.readouts { flex: none; display: flex; height: 14px; white-space: nowrap; }
.readouts.first { padding-top: 2px; }
.readout { flex: none; }
.arrow { width: 5px; height: 13px; margin-left: 2px; vertical-align: top; }
.plot { display: block; flex: 1; width: 100%; min-height: 0; }
.plain { color: #c6c4c4; }
.white { color: #fff; }
.red { color: #ff3232; }
.green { color: #00f000; }
.cyan { color: #20f0f0; }
.magenta { color: #f800f8; }
.yellow { color: #fcfc20; }
.olive { color: #c8c800; }
.forest { color: #005a00; }
.blue { color: #1ea0ff; }

.plot polyline, .plot line, .plot path { fill: none; stroke-width: 1; }
.plot .grid { stroke: #7c1010; stroke-dasharray: 1 3; }
.candle.up { --tone: #ff3232; }
.candle.down { --tone: #54fcfc; }
.candle.flat { --tone: #fff; }
.wick, .solid { fill: var(--tone); }
.hollow { fill: #020003; stroke: var(--tone); }
.plot .ceiling { stroke: #54fcfc; stroke-dasharray: 4 2; }
.plot .stroke-cyan { stroke: #20f0f0; }
.plot .stroke-white { stroke: #fff; }
.plot .stroke-green { stroke: #00f800; }
.plot .stroke-magenta { stroke: #f800f8; }
.plot .stroke-yellow { stroke: #fcfc20; }
.plot .stroke-blue { stroke: #1ea0ff; }
.plot .stroke-forest { stroke: #005a00; }
.plot .dash-green { stroke: #00f800; stroke-dasharray: 4 2; }
.plot .dash-magenta { stroke: #f800f8; stroke-dasharray: 4 2; }
.plot .dash-yellow { stroke: #fcfc20; stroke-dasharray: 4 2; }
.plot .cross { stroke: #00e000; stroke-width: 2; }
.plot .flag { stroke: #f800f8; stroke-width: 2; }
.plot .pointer { stroke: #c6c4c4; }
.plot .pip { fill: #ff1e1e; }
.forest-bar { fill: #005a00; }
.grey-bar { fill: #8a8a8a; }
.note { position: absolute; line-height: 14px; }
.high { left: 105px; top: 37px; }
.low { left: 216px; bottom: 10px; }
.hint { left: 0; bottom: 13px; color: #76746c; }
.coin { left: 55%; bottom: 0; line-height: 10px; font-weight: 700; font-size: 11px; color: #ff1e1e; }

.scale { position: relative; border-left: 1px solid var(--red); color: #ff3232; overflow: hidden; }
.study-scale { box-shadow: inset 1px 2px var(--red), inset -1px -1px var(--red); }
.mark { position: absolute; right: 2px; left: 0; transform: translateY(-7px); text-align: right; }
.mark::before { content: ""; position: absolute; left: 0; top: 7px; width: 5px; height: 1px; background: #e02020; }
.tick { position: absolute; left: 0; width: 2px; height: 1px; background: #e02020; }
.floor { position: absolute; left: 1px; right: 1px; bottom: 1px; height: 15px; line-height: 15px; background: #000084; color: #d8d8d8; border-top: 1px solid var(--red); }

.axis { position: relative; border-top: 1px solid var(--red); color: #ff3232; overflow: hidden; }
.month { position: absolute; top: 0; height: 16px; padding-left: 1px; border-left: 1px solid var(--red); line-height: 16px; white-space: nowrap; }
.month.first { border-left: 0; }
.month.cursor { padding-right: 2px; background: #000084; color: #d8d8d8; border-right: 1px solid var(--red); }
.axis-tick { position: absolute; top: 0; width: 1px; height: 2px; background: #e02020; }
.period { border-top: 1px solid var(--red); border-left: 1px solid var(--red); line-height: 15px; text-align: center; }
.templates { display: flex; overflow: hidden; border-top: 1px solid var(--red); }
.templates button { flex: none; padding: 0 4px 0 3px; border-right: 1px solid var(--red); line-height: 14px; }
.templates .slim { padding: 0 3px 0 2px; }
.templates .pressed { background: #3c3c3a; }
.templates .lit { color: #20f0f0; font-weight: 700; }
.zoomers { display: flex; border-top: 1px solid var(--red); }
.zoomers button { flex: 1; border-left: 1px solid var(--red); line-height: 14px; }
.extras { flex: none; display: flex; height: 18px; box-sizing: border-box; border: solid var(--red); border-width: 1px 0 1px 1px; }
.extras button { padding: 0 4px 0 3px; border-right: 1px solid var(--red); line-height: 14px; }

/* index ticker */
.status { flex: none; display: flex; align-items: center; height: 21px; box-sizing: border-box; border-top: 2px solid #fff; background: #efead9; padding-left: 1px; white-space: nowrap; }
.index { flex: none; display: grid; grid-template-columns: 25px 46px 42px 51px 51px; }
.index b { font: 700 12px/14px "Open Sans", sans-serif; color: #068006; text-align: right; }
.amount { padding-left: 7px; }
.meter { flex: none; width: 108px; height: 19px; margin-right: 4px; }
.status-icons { margin-left: auto; }
.status-icons svg { display: block; width: 84px; height: 19px; }

/* task bar */
.taskbar { flex: none; display: flex; height: 30px; color: #fff; background: linear-gradient(#3a80f0, #2a62dc 4px, #245ad8 24px, #1b46b4); }
.start { flex: none; display: flex; align-items: center; gap: 5px; width: 97px; padding-left: 11px; box-sizing: border-box; border-radius: 0 10px 12px 0; background: linear-gradient(#6cbc6c, #318b31 5px, #348f34 22px, #226a22); box-shadow: inset -3px 0 5px #1d631d; }
.start svg { width: 20px; height: 18px; }
.start span { font: italic 400 19px/26px "Noto Sans CJK SC", sans-serif; text-shadow: 1px 1px 2px #133f13; }
.quick { flex: none; display: flex; align-items: center; gap: 6px; width: 102px; padding-left: 9px; box-sizing: border-box; }
.quick svg { width: 18px; height: 18px; }
.more { margin-left: 3px; font-size: 16px; line-height: 12px; align-self: flex-start; padding-top: 3px; }
.tasks { flex: 1; display: flex; gap: 3px; min-width: 0; padding: 3px 0 2px; }
.tasks button { flex: 1; max-width: 160px; display: flex; align-items: center; gap: 3px; min-width: 0; padding-left: 8px; overflow: hidden; border-radius: 3px; background: linear-gradient(#5c9cf8, #3c7ff2 4px, #3a7cf0 20px, #2f69d8); }
.task-icon { flex: none; width: 18px; height: 18px; }
.language { flex: none; width: 61px; box-sizing: border-box; padding: 3px 0 0 8px; }
.language svg { width: 44px; height: 24px; }
.tray { flex: none; display: flex; align-items: center; width: 94px; background: linear-gradient(#2bb0f4, #1290e8 5px, #128ce4 24px, #0f6cc0); }
.tray svg { flex: none; width: 58px; height: 24px; margin: 0 2px 0 -9px; }
.tray time { font: 10px/14px "Liberation Mono", monospace; }
</style>
